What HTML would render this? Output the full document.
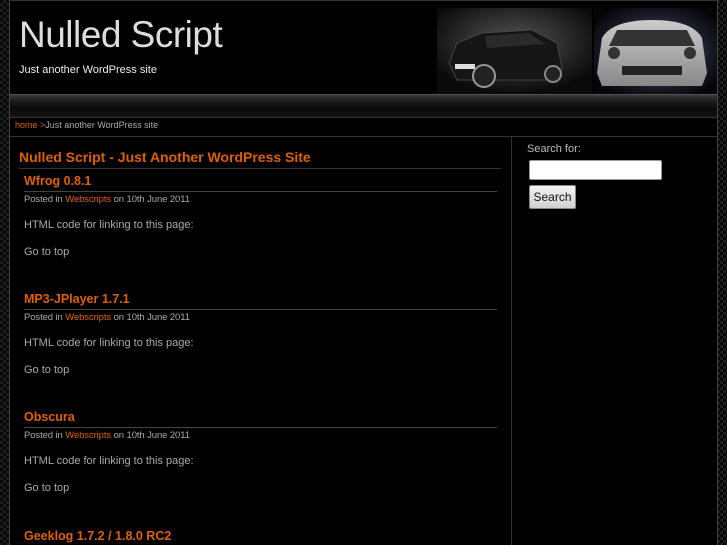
<!DOCTYPE html>
<html><head><meta charset="utf-8"><style>
*{margin:0;padding:0;box-sizing:border-box}
html,body{width:727px;height:545px;overflow:hidden}
body{background:#0c0c0c repeating-conic-gradient(#1c1c1c 0 25%,#080808 0 50%) 0 0/6px 6px;font-family:"Liberation Sans",sans-serif;position:relative}
#wrap{position:absolute;left:9px;top:0;width:709px;height:545px;background:#000;border-left:1px solid #444;border-right:1px solid #444;overflow:hidden}
#hdr{position:absolute;left:0;top:0;width:709px;height:94px;background:#000;border-top:1px solid #333}
h1{position:absolute;left:9px;top:13px;font-weight:normal;font-size:37px;color:#ddd;letter-spacing:-0.5px}
.tag{position:absolute;left:9px;top:63px;font-size:11px;color:#eee}
#nav{position:absolute;left:0;top:94px;width:709px;height:24px;background:linear-gradient(#3a3a3a,#1e1e1e 25%,#0a0a0a 60%,#141414);border-top:1px solid #555;border-bottom:1px solid #333}
#bc{position:absolute;left:5px;top:120px;font-size:9px;color:#aaa}
#bc a{color:#e06000}
#content{position:absolute;left:0;top:136px;width:709px;height:409px;border-top:1px solid #333}
#side{position:absolute;left:501px;top:0;width:1px;height:409px;background:#333}
h2{position:absolute;left:9px;top:12px;font-size:14px;color:#e06000;width:482px;border-bottom:1px solid #333;padding-bottom:3px}
.post{position:absolute;left:14px;width:473px}
.post h3{font-size:12.5px;color:#e06000;border-bottom:1px solid #444;padding-bottom:1px;height:18px}
.meta{font-size:9.5px;color:#aaa;margin-top:2px;letter-spacing:-0.1px}
.meta a{color:#e06000}
.p{font-size:11px;color:#aaa;margin-top:14px}
.p2{font-size:11px;color:#aaa;margin-top:15px}
.sl{position:absolute;left:517px;top:6px;font-size:11px;color:#bbb}
.inp{position:absolute;left:519px;top:23px;width:133px;height:20px;background:#fff;border:1px solid #999;border-radius:2px}
.btn{position:absolute;left:519px;top:48px;width:47px;height:24px;background:linear-gradient(#f4f4f4,#d0d0d0);border:1px solid #888;border-radius:2px;font-size:12px;color:#111;text-align:center;line-height:22px}
</style></head><body>
<div id="wrap">
<div id="hdr">
<h1>Nulled Script</h1>
<div class="tag">Just another WordPress site</div>
<svg style="position:absolute;left:427px;top:7px" width="282" height="86">
<defs><radialGradient id="g1" cx=".5" cy=".4" r=".6"><stop offset="0" stop-color="#555"/><stop offset="1" stop-color="#0a0a0a"/></radialGradient>
<radialGradient id="g2" cx=".5" cy=".5" r=".6"><stop offset="0" stop-color="#8899aa"/><stop offset=".6" stop-color="#223"/><stop offset="1" stop-color="#050508"/></radialGradient>
<linearGradient id="c2" x1="0" y1="0" x2="0" y2="1"><stop offset="0" stop-color="#ccc"/><stop offset="1" stop-color="#888"/></linearGradient></defs>
<rect width="155" height="86" fill="url(#g1)"/>
<rect x="157" width="125" height="86" fill="url(#g2)"/>
<path d="M12 55 L20 35 L45 25 L95 22 L120 35 L125 60 L118 72 L20 72 Z" fill="#151515" stroke="#444"/>
<path d="M48 28 L92 25 L108 36 L50 40 Z" fill="#2a2a2a"/>
<circle cx="47" cy="68" r="11" fill="#222" stroke="#999" stroke-width="2"/>
<circle cx="116" cy="66" r="8" fill="#222" stroke="#888" stroke-width="2"/>
<rect x="18" y="56" width="20" height="5" fill="#ddd"/>
<path d="M165 30 Q175 12 215 12 Q255 12 265 30 L270 65 L265 78 L165 78 L160 65 Z" fill="url(#c2)"/>
<path d="M180 22 L250 22 L258 38 L172 38 Z" fill="#333"/>
<rect x="185" y="58" width="60" height="9" fill="#222"/>
<circle cx="177" cy="45" r="6" fill="#333"/><circle cx="253" cy="45" r="6" fill="#333"/>
</svg>
</div>
<div id="nav"></div>
<div id="bc"><a>home</a> <a>&gt;</a>Just another WordPress site</div>
<div id="content">
<div id="side"></div>
<h2>Nulled Script - Just Another WordPress Site</h2>
<div class="post" style="top:37px"><h3>Wfrog 0.8.1</h3><div class="meta">Posted in <a>Webscripts</a> on 10th June 2011</div><div class="p">HTML code for linking to this page:</div><div class="p2">Go to top</div></div>
<div class="post" style="top:155px"><h3>MP3-JPlayer 1.7.1</h3><div class="meta">Posted in <a>Webscripts</a> on 10th June 2011</div><div class="p">HTML code for linking to this page:</div><div class="p2">Go to top</div></div>
<div class="post" style="top:273px"><h3>Obscura</h3><div class="meta">Posted in <a>Webscripts</a> on 10th June 2011</div><div class="p">HTML code for linking to this page:</div><div class="p2">Go to top</div></div>
<div class="post" style="top:392px"><h3>Geeklog 1.7.2 / 1.8.0 RC2</h3></div>
<div class="sl">Search for:</div>
<div class="inp"></div>
<div class="btn">Search</div>
</div>
</div>
</body></html>
